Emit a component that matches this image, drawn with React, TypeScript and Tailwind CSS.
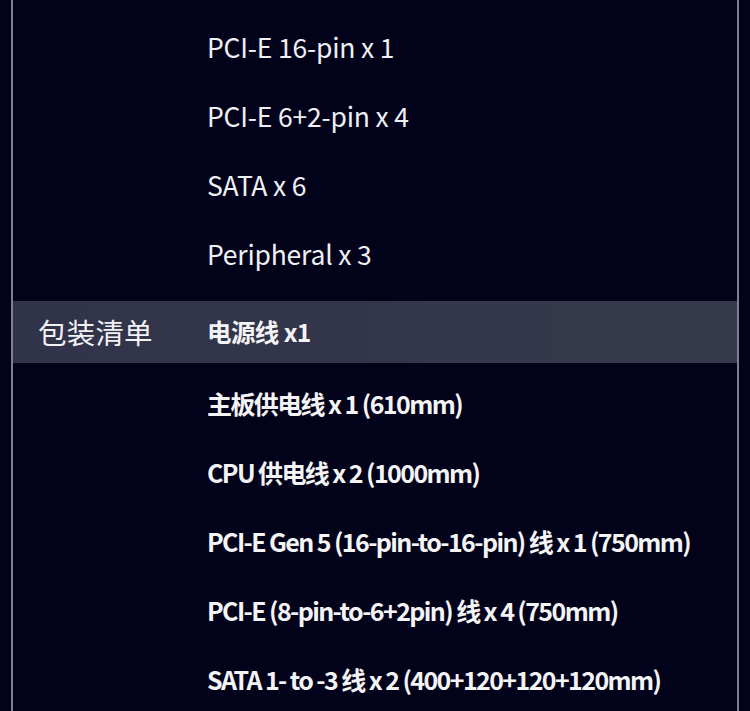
const CONNECTORS = [
  "PCI-E 16-pin x 1",
  "PCI-E 6+2-pin x 4",
  "SATA x 6",
  "Peripheral x 3",
];

const PACKAGE = [
  "主板供电线 x 1 (610mm)",
  "CPU 供电线 x 2 (1000mm)",
  "PCI-E Gen 5 (16-pin-to-16-pin) 线 x 1 (750mm)",
  "PCI-E (8-pin-to-6+2pin) 线 x 4 (750mm)",
  "SATA 1- to -3 线 x 2 (400+120+120+120mm)",
];

const FONT = "font-['Noto_Sans_CJK_SC','Noto_Sans',sans-serif]";

export default function App() {
  return (
    <div className={`w-[750px] h-[711px] overflow-hidden bg-[#02031a] ${FONT}`}>
      <div className="mx-[11px] h-full border-x-2 border-[#7d808e] pt-[12px]">
        {/* Output connectors (continued) */}
        {CONNECTORS.map((t) => (
          <div key={t} className="flex h-[69px] items-center">
            <div className="w-[194px] shrink-0" />
            <div className="text-[26.5px] text-[#eef0f4] tracking-[-0.2px]">{t}</div>
          </div>
        ))}

        {/* Package header row */}
        <div className="mt-[13px] flex h-[62px] items-center bg-gradient-to-r from-[#31334a] to-[#363a4c]">
          <div className="w-[194px] shrink-0 pl-[25px] text-[28.5px] font-normal text-[#f2f2f5] tracking-[0.2px]">
            包装清单
          </div>
          <div className="text-[24.5px] font-bold text-[#f4f4f6] tracking-[-0.6px]">电源线 x1</div>
        </div>

        <div className="mt-[6px]">
          {PACKAGE.map((t) => (
            <div key={t} className="flex h-[69px] items-center">
              <div className="w-[194px] shrink-0" />
              <div className="text-[25px] font-bold text-[#f4f4f6] tracking-[-1.6px] whitespace-nowrap">
                {t}
              </div>
            </div>
          ))}
        </div>
      </div>
    </div>
  );
}
